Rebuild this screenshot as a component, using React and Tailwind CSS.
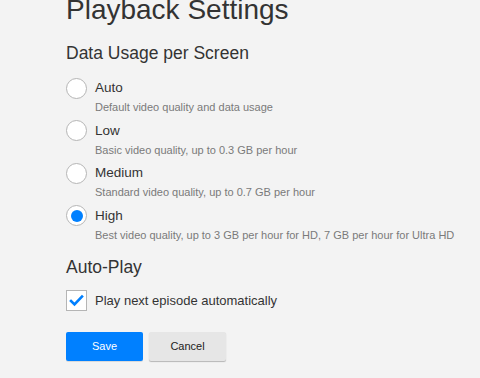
import React, { useState } from 'react';

const options = [
  { id: 'auto', label: 'Auto', desc: 'Default video quality and data usage' },
  { id: 'low', label: 'Low', desc: 'Basic video quality, up to 0.3 GB per hour' },
  { id: 'medium', label: 'Medium', desc: 'Standard video quality, up to 0.7 GB per hour' },
  { id: 'high', label: 'High', desc: 'Best video quality, up to 3 GB per hour for HD, 7 GB per hour for Ultra HD' },
];

export default function App() {
  const [quality, setQuality] = useState('high');
  const [autoPlay, setAutoPlay] = useState(true);

  return (
    <div className="w-[480px] h-[378px] overflow-hidden bg-[#f3f3f3] pl-[66px] text-[#333] font-['Liberation_Sans',Arial,sans-serif]">
      <h1 className="mt-[-4px] text-[28px] leading-[28px] font-normal">Playback Settings</h1>

      <h2 className="mt-[20px] text-[17.5px] leading-[18px] font-normal">Data Usage per Screen</h2>

      <div className="mt-[15.5px] flex flex-col gap-[6px]">
        {options.map((opt) => (
          <label key={opt.id} className="flex items-start cursor-pointer" onClick={() => setQuality(opt.id)}>
            <span className="w-[21px] h-[21px] shrink-0 rounded-full bg-white border border-[#b5b5b5] flex items-center justify-center">
              {quality === opt.id && <span className="w-[12px] h-[12px] rounded-full bg-[#0080ff]" />}
            </span>
            <span className="ml-[8px] mt-[1.5px] flex flex-col whitespace-nowrap">
              <span className="text-[13.5px] leading-[18px]">{opt.label}</span>
              <span className="text-[11px] leading-[14px] mt-[3px] text-[#7a7a7a]">{opt.desc}</span>
            </span>
          </label>
        ))}
      </div>

      <h2 className="mt-[16.5px] text-[17.5px] leading-[18px] font-normal">Auto-Play</h2>

      <label className="mt-[14px] flex items-center cursor-pointer" onClick={() => setAutoPlay(!autoPlay)}>
        <span className="w-[21px] h-[21px] shrink-0 bg-white border border-[#b5b5b5] flex items-center justify-center">
          {autoPlay && (
            <svg width="15" height="13" viewBox="0 0 15 13" fill="none">
              <path d="M2 7 L5.5 10.5 L13 2.5" stroke="#0080ff" strokeWidth="2.6" strokeLinecap="square" strokeLinejoin="miter" />
            </svg>
          )}
        </span>
        <span className="ml-[8px] text-[13px] leading-[21px]">Play next episode automatically</span>
      </label>

      <div className="mt-[21px] flex gap-[6px]">
        <button className="w-[77px] h-[29px] bg-[#0080ff] text-white text-[11px] rounded-[2px] shadow-[0_1px_0_rgba(0,0,0,0.1)]">Save</button>
        <button className="w-[77px] h-[29px] bg-[#e6e6e6] text-[#222] text-[11px] rounded-[2px] shadow-[0_1px_1px_rgba(0,0,0,0.25)]">Cancel</button>
      </div>
    </div>
  );
}
